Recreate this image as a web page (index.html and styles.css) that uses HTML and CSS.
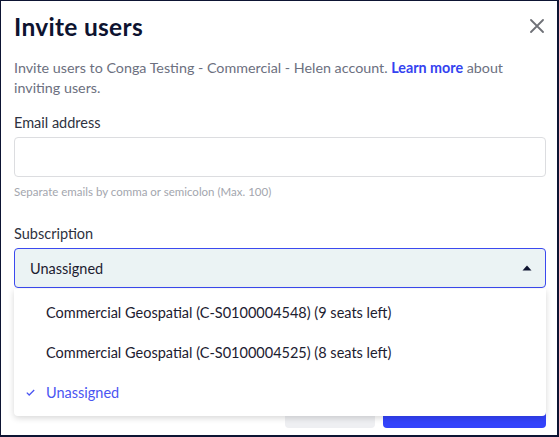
FILE: index.html
```html
<!DOCTYPE html>
<html>
<head>
<meta charset="utf-8">
<link rel="stylesheet" href="styles.css">
</head>
<body>
<div class="dialog">
  <div class="header">
    <h1 class="title">Invite users</h1>
    <button class="close" aria-label="Close">
      <svg width="14" height="14" viewBox="0 0 14 14"><path d="M1 1L13 13M13 1L1 13" stroke="#6f7177" stroke-width="1.8" stroke-linecap="round"/></svg>
    </button>
  </div>
  <p class="desc">Invite users to Conga Testing - Commercial - Helen account. <a class="link">Learn more</a> about inviting users.</p>
  <label class="label label-email">Email address</label>
  <div class="input"></div>
  <div class="helper">Separate emails by comma or semicolon (Max. 100)</div>
  <label class="label label-sub">Subscription</label>
  <div class="select-wrap">
    <div class="select">
      <span>Unassigned</span>
      <svg class="caret" width="10" height="6" viewBox="0 0 10 6"><path d="M0.5 5.5L5 0.5L9.5 5.5Z" fill="#0e1430"/></svg>
    </div>
    <ul class="menu">
      <li class="item">Commercial Geospatial (C-S0100004548) (9 seats left)</li>
      <li class="item">Commercial Geospatial (C-S0100004525) (8 seats left)</li>
      <li class="item selected">
        <svg class="check" width="9" height="7" viewBox="0 0 9 7"><path d="M0.8 3.6L3.2 6L8.2 1" fill="none" stroke="#4a55f2" stroke-width="1.3"/></svg>
        Unassigned
      </li>
    </ul>
  </div>
  <div class="footer">
    <button class="btn btn-cancel"></button>
    <button class="btn btn-primary"></button>
  </div>
</div>
</body>
</html>
```
FILE: styles.css
```css
html, body {
  margin: 0;
  padding: 0;
}
body {
  background: #0d1433;
  width: 559px;
  height: 437px;
  overflow: hidden;
  font-family: Lato, "Liberation Sans", sans-serif;
}
.dialog {
  background: #ffffff;
  margin: 1px 2px 0 1px;
  height: 434px;
  box-sizing: border-box;
  padding: 12px 11px 0 13px;
}
.header {
  display: flex;
  justify-content: space-between;
  align-items: flex-start;
}
.title {
  margin: 0;
  font-size: 24.5px;
  line-height: 28px;
  font-weight: 700;
  color: #0d1330;
  letter-spacing: 0.3px;
}
.close {
  border: 0;
  background: none;
  padding: 0;
  margin: 6px 2px 0 0;
  width: 14px;
  height: 14px;
  display: block;
}
.close svg { display: block; }
.desc {
  margin: 17px 0 0;
  font-size: 14.3px;
  line-height: 20px;
  color: #6c7080;
}
.link {
  color: #3443f0;
  font-weight: 700;
}
.label {
  display: block;
  font-size: 14.5px;
  line-height: 20px;
  color: #2e3240;
}
.label-email { margin-top: 15px; }
.label-sub { margin-top: 24px; }
.input {
  margin-top: 4px;
  height: 40px;
  width: 532px;
  box-sizing: border-box;
  border: 1px solid #dcdde0;
  border-radius: 4px;
}
.helper {
  margin-top: 7px;
  font-size: 11.5px;
  line-height: 16px;
  color: #a3a6ae;
}
.select-wrap {
  position: relative;
  margin-top: 4px;
  width: 532px;
}
.select {
  height: 40px;
  box-sizing: border-box;
  border: 1px solid #3b49ef;
  border-radius: 4px;
  background: #ebf3f4;
  display: flex;
  align-items: center;
  justify-content: space-between;
  padding: 0 13px 0 15px;
  font-size: 14.5px;
  color: #1c2030;
}
.caret { display: block; }
.menu {
  position: absolute;
  left: 0;
  top: 41px;
  width: 532px;
  margin: 0;
  padding: 3px 0 4px;
  list-style: none;
  background: #ffffff;
  border-radius: 0 0 4px 4px;
  box-shadow: 0 2px 6px rgba(0, 0, 0, 0.16);
  z-index: 2;
}
.item {
  height: 40px;
  display: flex;
  align-items: center;
  padding-left: 32px;
  font-size: 14.5px;
  color: #1c2030;
  position: relative;
}
.selected { color: #4a55f2; }
.check {
  position: absolute;
  left: 12px;
  top: 17px;
}
.footer {
  margin-top: 100px;
  display: flex;
  justify-content: flex-end;
  gap: 8px;
}
.btn {
  height: 40px;
  border: 0;
  border-radius: 4px;
  padding: 0;
}
.btn-cancel {
  width: 90px;
  background: #eeeff2;
}
.btn-primary {
  width: 163px;
  background: #3343fb;
}
```
